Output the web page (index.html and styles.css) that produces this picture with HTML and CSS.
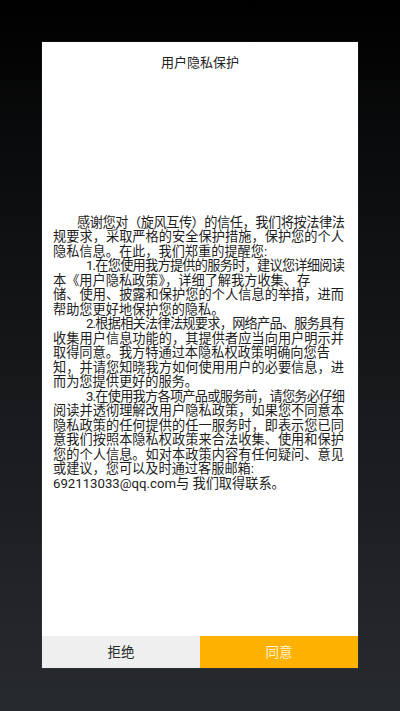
FILE: index.html
```html
<!DOCTYPE html>
<html lang="zh-CN">
<head>
<meta charset="utf-8">
<title>用户隐私保护</title>
<link rel="stylesheet" href="styles.css">
</head>
<body>
<div class="screen">
  <div class="dialog">
    <div class="title">用户隐私保护</div>
    <div class="content">
      <div class="text">
        <p class="para">
          <span class="ln full tight ind">感谢您对（旋风互传）的信任，我们将按法律法</span>
          <span class="ln full">规要求，采取严格的安全保护措施，保护您的个人</span>
          <span class="ln">隐私信息。在此，我们郑重的提醒您:</span>
        </p>
        <p class="para">
          <span class="ln full tight ind-num">1.在您使用我方提供的服务时，建议您详细阅读</span>
          <span class="ln">本《用户隐私政策》，详细了解我方收集、存</span>
          <span class="ln full">储、使用、披露和保护您的个人信息的举措，进而</span>
          <span class="ln">帮助您更好地保护您的隐私。</span>
        </p>
        <p class="para">
          <span class="ln full tight ind-num">2.根据相关法律法规要求，网络产品、服务具有</span>
          <span class="ln full">收集用户信息功能的，其提供者应当向用户明示并</span>
          <span class="ln">取得同意。我方特通过本隐私权政策明确向您告</span>
          <span class="ln full">知，并请您知晓我方如何使用用户的必要信息，进</span>
          <span class="ln">而为您提供更好的服务。</span>
        </p>
        <p class="para">
          <span class="ln full tight ind-num">3.在使用我方各项产品或服务前，请您务必仔细</span>
          <span class="ln full">阅读并透彻理解改用户隐私政策，如果您不同意本</span>
          <span class="ln full">隐私政策的任何提供的任一服务时，即表示您已同</span>
          <span class="ln full">意我们按照本隐私权政策来合法收集、使用和保护</span>
          <span class="ln full">您的个人信息。如对本政策内容有任何疑问、意见</span>
          <span class="ln">或建议，您可以及时通过客服邮箱:</span>
          <span class="ln">692113033@qq.com与 我们取得联系。</span>
        </p>
      </div>
    </div>
    <div class="actions">
      <button class="btn btn-refuse">拒绝</button>
      <button class="btn btn-agree">同意</button>
    </div>
  </div>
</div>
</body>
</html>
```

FILE: styles.css
```css
html, body {
  margin: 0;
  padding: 0;
}
body {
  width: 400px;
  height: 711px;
  background: linear-gradient(to bottom, #000000 0%, #0a0b0c 20%, #272a2f 100%);
  font-family: Roboto, "Noto Sans CJK SC", sans-serif;
  overflow: hidden;
}
.screen {
  height: 711px;
  padding: 42px 42px 43px;
  box-sizing: border-box;
  display: flex;
}
.dialog {
  flex: 0 0 316px;
  width: 316px;
  min-width: 0;
  background: #ffffff;
  display: flex;
  flex-direction: column;
  box-shadow: 0 0 1px rgba(255, 255, 255, 0.25);
}
.title {
  height: 29px;
  box-sizing: border-box;
  padding-top: 13px;
  line-height: 16px;
  font-size: 13px;
  text-align: center;
  color: #222222;
}
.content {
  flex: 1;
  min-width: 0;
  display: flex;
  flex-direction: column;
  justify-content: center;
  padding: 0 14px 0 11px;
}
.text {
  width: 291px;
}
.para {
  margin: 0;
  font-size: 13.2px;
  line-height: 14.5px;
  color: #1d1d1d;
}
.ln {
  display: block;
  white-space: nowrap;
}
.ln.full {
  text-align: justify;
  text-align-last: justify;
}
.ln.tight {
  letter-spacing: -0.9px;
}
.ln.ind {
  padding-left: 24px;
}
.ln.ind-num {
  padding-left: 33px;
}
.actions {
  display: flex;
  height: 32px;
}
.btn {
  flex: 1 1 0;
  min-width: 0;
  border: 0;
  margin: 0;
  padding: 0;
  font-family: Roboto, "Noto Sans CJK SC", sans-serif;
  font-size: 13.5px;
  line-height: 32px;
  cursor: pointer;
}
.btn-refuse {
  background: #f0eff0;
  color: #2a2a2a;
}
.btn-agree {
  background: #ffb100;
  color: #fff1d2;
}
```
